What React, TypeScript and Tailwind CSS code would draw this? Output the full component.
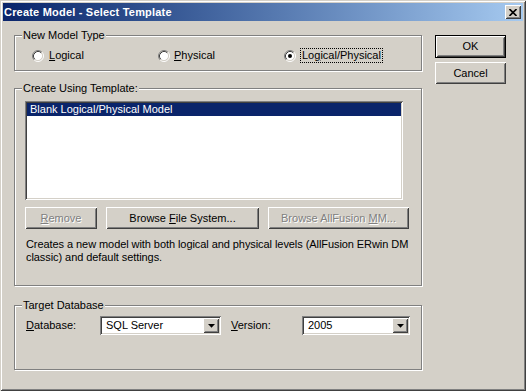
import React from "react";

const raised =
  "shadow-[inset_1px_1px_0_#ffffff,inset_-1px_-1px_0_#404040,inset_2px_2px_0_#d4d0c8,inset_-2px_-2px_0_#808080]";
const sunken =
  "shadow-[inset_1px_1px_0_#808080,inset_-1px_-1px_0_#ffffff,inset_2px_2px_0_#404040,inset_-2px_-2px_0_#d4d0c8]";
const etched = "border border-[#808080] shadow-[inset_1px_1px_0_#ffffff,1px_1px_0_#ffffff]";

const Radio = ({ checked }: { checked?: boolean }) => (
  <svg width="12" height="12" viewBox="0 0 12 12" className="shrink-0">
    <circle cx="6" cy="6" r="4.5" fill="#ffffff" />
    <path d="M2.11 9.89 A5.5 5.5 0 0 1 9.89 2.11" stroke="#808080" fill="none" />
    <path d="M9.89 2.11 A5.5 5.5 0 0 1 2.11 9.89" stroke="#ffffff" fill="none" />
    <path d="M2.82 9.18 A4.5 4.5 0 0 1 9.18 2.82" stroke="#404040" fill="none" />
    <path d="M9.18 2.82 A4.5 4.5 0 0 1 2.82 9.18" stroke="#d4d0c8" fill="none" />
    {checked && <circle cx="6" cy="6" r="2" fill="#000000" />}
  </svg>
);

const Arrow = () => (
  <svg width="7" height="4" viewBox="0 0 7 4">
    <polygon points="0,0 7,0 3.5,3.8" fill="#000000" />
  </svg>
);

const GroupLabel = ({ text }: { text: string }) => (
  <span className="absolute left-[7px] top-[-7px] bg-[#d4d0c8] px-[1px] leading-[13px]">
    {text}
  </span>
);

const Btn = ({
  label,
  w,
  disabled,
}: {
  label: React.ReactNode;
  w: string;
  disabled?: boolean;
}) => (
  <div
    className={`${w} h-[22px] flex items-center justify-center bg-[#d4d0c8] ${raised} ${
      disabled ? "text-[#808080] [text-shadow:1px_1px_0_#ffffff]" : "text-black"
    }`}
  >
    {label}
  </div>
);

const Combo = ({ value, w }: { value: string; w: string }) => (
  <div className={`${w} h-[19px] flex bg-white p-[2px] ${sunken}`}>
    <span className="flex-1 pl-[4px] leading-[15px]">{value}</span>
    <div className={`w-[16px] h-[15px] flex items-center justify-center bg-[#d4d0c8] ${raised}`}>
      <Arrow />
    </div>
  </div>
);

export default function App() {
  return (
    <div className="w-[526px] h-[391px] bg-[#d4d0c8] p-[3px] shadow-[inset_1px_1px_0_#d4d0c8,inset_-1px_-1px_0_#404040,inset_2px_2px_0_#ffffff,inset_-2px_-2px_0_#808080] font-['Liberation_Sans',Arial,sans-serif] text-[11px] text-black select-none">
      {/* title bar */}
      <div className="h-[18px] flex items-center bg-gradient-to-r from-[#0a246a] to-[#a6caf0] pl-[1px] pr-[2px]">
        <span className="flex-1 font-bold text-white leading-[13px] tracking-[0.2px]">
          Create Model - Select Template
        </span>
        <div className={`w-[16px] h-[14px] flex items-center justify-center bg-[#d4d0c8] ${raised}`}>
          <svg width="8" height="7" viewBox="0 0 8 7">
            <path d="M0.5 0 L7.5 7 M7.5 0 L0.5 7" stroke="#000000" strokeWidth="1.6" />
          </svg>
        </div>
      </div>

      <div className="flex pl-[11px]">
        <div className="w-[409px] flex flex-col">
          {/* New Model Type */}
          <div className={`relative mt-[14px] w-[408px] h-[36px] ${etched}`}>
            <GroupLabel text="New Model Type" />
            <div className="flex pt-[12px] pl-[17px] leading-[13px]">
              <div className="w-[126px] flex items-center gap-[5px]">
                <Radio />
                <span>
                  <u>L</u>ogical
                </span>
              </div>
              <div className="w-[126px] flex items-center gap-[4px]">
                <Radio />
                <span>
                  <u>P</u>hysical
                </span>
              </div>
              <div className="flex items-center gap-[4px]">
                <Radio checked />
                <span className="border border-dotted border-black px-[1px]">
                  Lo<u>g</u>ical/Physical
                </span>
              </div>
            </div>
          </div>

          {/* Create Using Template */}
          <div className={`relative mt-[17px] w-[408px] h-[198px] ${etched}`}>
            <GroupLabel text="Create Using Template:" />
            <div className={`mt-[12px] ml-[10px] w-[378px] h-[99px] bg-white p-[2px] ${sunken}`}>
              <div className="h-[13px] bg-[#0a246a] text-white pl-[3px] leading-[13px]">
                Blank Logical/Physical Model
              </div>
            </div>
            <div className="flex gap-[9px] mt-[7px] ml-[10px]">
              <Btn
                w="w-[72px]"
                disabled
                label={
                  <span>
                    <u>R</u>emove
                  </span>
                }
              />
              <Btn
                w="w-[153px]"
                label={
                  <span>
                    Browse <u>F</u>ile System...
                  </span>
                }
              />
              <Btn
                w="w-[141px]"
                disabled
                label={
                  <span>
                    Browse AllFusion <u>M</u>M...
                  </span>
                }
              />
            </div>
            <div className="mt-[9px] ml-[11px] leading-[13px] tracking-[-0.07px]">
              <div>Creates a new model with both logical and physical levels (AllFusion ERwin DM</div>
              <div>classic) and default settings.</div>
            </div>
          </div>

          {/* Target Database */}
          <div className={`relative mt-[19px] w-[408px] h-[65px] ${etched}`}>
            <GroupLabel text="Target Database" />
            <div className="flex items-center mt-[10px] ml-[11px]">
              <span className="w-[74px]">
                <u>D</u>atabase:
              </span>
              <Combo value="SQL Server" w="w-[121px]" />
              <span className="w-[71px] ml-[10px]">
                <u>V</u>ersion:
              </span>
              <Combo value="2005" w="w-[108px]" />
            </div>
          </div>
        </div>

        {/* OK / Cancel */}
        <div className="ml-[12px] pt-[14px] flex flex-col gap-[4px]">
          <div className="w-[71px] h-[23px] border border-black">
            <div className={`w-full h-full flex items-center justify-center ${raised}`}>OK</div>
          </div>
          <Btn w="w-[71px]" label="Cancel" />
        </div>
      </div>
    </div>
  );
}
